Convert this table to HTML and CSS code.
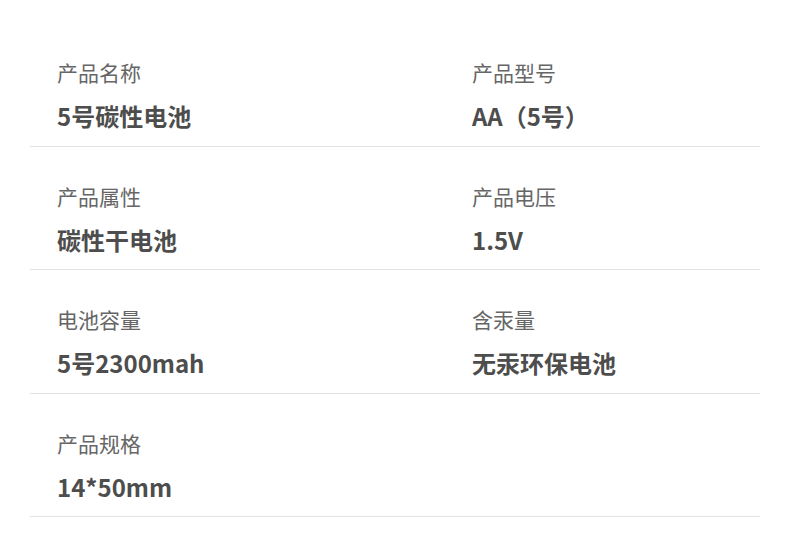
FILE: index.html
```html
<!DOCTYPE html>
<html lang="zh-CN">
<head>
<meta charset="utf-8">
<title>产品参数</title>
<link rel="stylesheet" href="styles.css">
</head>
<body>
<div class="specs">
  <div class="row">
    <div class="cell"><div class="label">产品名称</div><div class="value">5号碳性电池</div></div>
    <div class="cell"><div class="label">产品型号</div><div class="value">AA（5号）</div></div>
  </div>
  <div class="row">
    <div class="cell"><div class="label">产品属性</div><div class="value">碳性干电池</div></div>
    <div class="cell"><div class="label">产品电压</div><div class="value">1.5V</div></div>
  </div>
  <div class="row">
    <div class="cell"><div class="label">电池容量</div><div class="value">5号2300mah</div></div>
    <div class="cell"><div class="label">含汞量</div><div class="value">无汞环保电池</div></div>
  </div>
  <div class="row">
    <div class="cell"><div class="label">产品规格</div><div class="value">14*50mm</div></div>
    <div class="cell"></div>
  </div>
</div>
</body>
</html>
```
FILE: styles.css
```css
html, body {
  margin: 0;
  padding: 0;
  background: #ffffff;
}
body {
  font-family: "Noto Sans CJK SC", "Noto Sans", sans-serif;
  width: 790px;
  height: 538px;
  overflow: hidden;
}
.specs {
  margin: 23px 30px 0 30px;
  width: 730px;
}
.row {
  display: grid;
  grid-template-columns: 415px 1fr;
  height: 122.5px;
  border-bottom: 1px solid #e3e3e3;
}
.cell {
  padding: 35px 0 0 27px;
}
.label {
  font-size: 21px;
  line-height: 28px;
  color: #666666;
}
.value {
  margin-top: 14px;
  font-size: 24px;
  line-height: 32px;
  font-weight: 700;
  color: #4d4d4d;
}
```
